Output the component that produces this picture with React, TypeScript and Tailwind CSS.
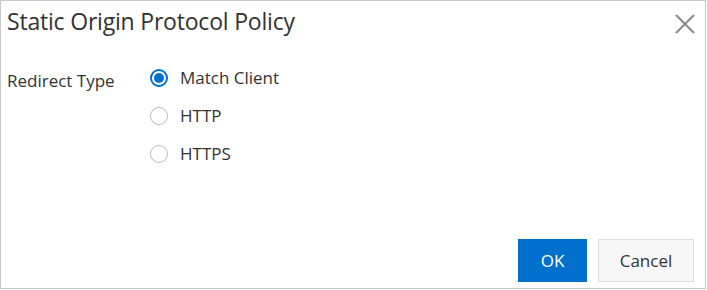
import React, { useState } from 'react';

const options = ['Match Client', 'HTTP', 'HTTPS'];

const App: React.FC = () => {
  const [value, setValue] = useState('Match Client');

  return (
    <div
      className="w-[706px] h-[289px] bg-white border border-[#c8c8c8] flex flex-col text-[#333]"
      style={{ fontFamily: '"Open Sans", "Noto Sans", sans-serif' }}
    >
      <div className="flex items-start justify-between h-[45px] pl-[6px] pr-[10px]">
        <h2 className="text-[23px] leading-[23px] mt-[9px] tracking-[-0.2px]">Static Origin Protocol Policy</h2>
        <button className="mt-[12px] w-[21px] h-[21px] flex items-center justify-center">
          <svg width="20" height="20" viewBox="0 0 20 20">
            <path d="M1 1L19 19M19 1L1 19" stroke="#888" strokeWidth="2" />
          </svg>
        </button>
      </div>
      <div className="flex pl-[6px] mt-[21px]">
        <div className="w-[143px] text-[17px] leading-[22px] pt-[3px]">Redirect Type</div>
        <div className="flex flex-col gap-[16px]">
          {options.map((opt) => (
            <label key={opt} className="flex items-center gap-[12px] h-[22px] cursor-pointer" onClick={() => setValue(opt)}>
              {value === opt ? (
                <span className="w-[18px] h-[18px] rounded-full border-2 border-[#0070cc] flex items-center justify-center">
                  <span className="w-[10px] h-[10px] rounded-full bg-[#0070cc]" />
                </span>
              ) : (
                <span className="w-[18px] h-[18px] rounded-full border border-[#bbb]" />
              )}
              <span className="text-[17px] leading-[22px]">{opt}</span>
            </label>
          ))}
        </div>
      </div>
      <div className="flex-1" />
      <div className="flex justify-end gap-[11px] pr-[11px] pb-[6px]">
        <button className="w-[69px] h-[43px] bg-[#0070cc] text-white text-[17px]">OK</button>
        <button className="w-[96px] h-[43px] bg-[#f7f7f7] border border-[#ddd] text-[17px] text-[#333]">Cancel</button>
      </div>
    </div>
  );
};

export default App;
